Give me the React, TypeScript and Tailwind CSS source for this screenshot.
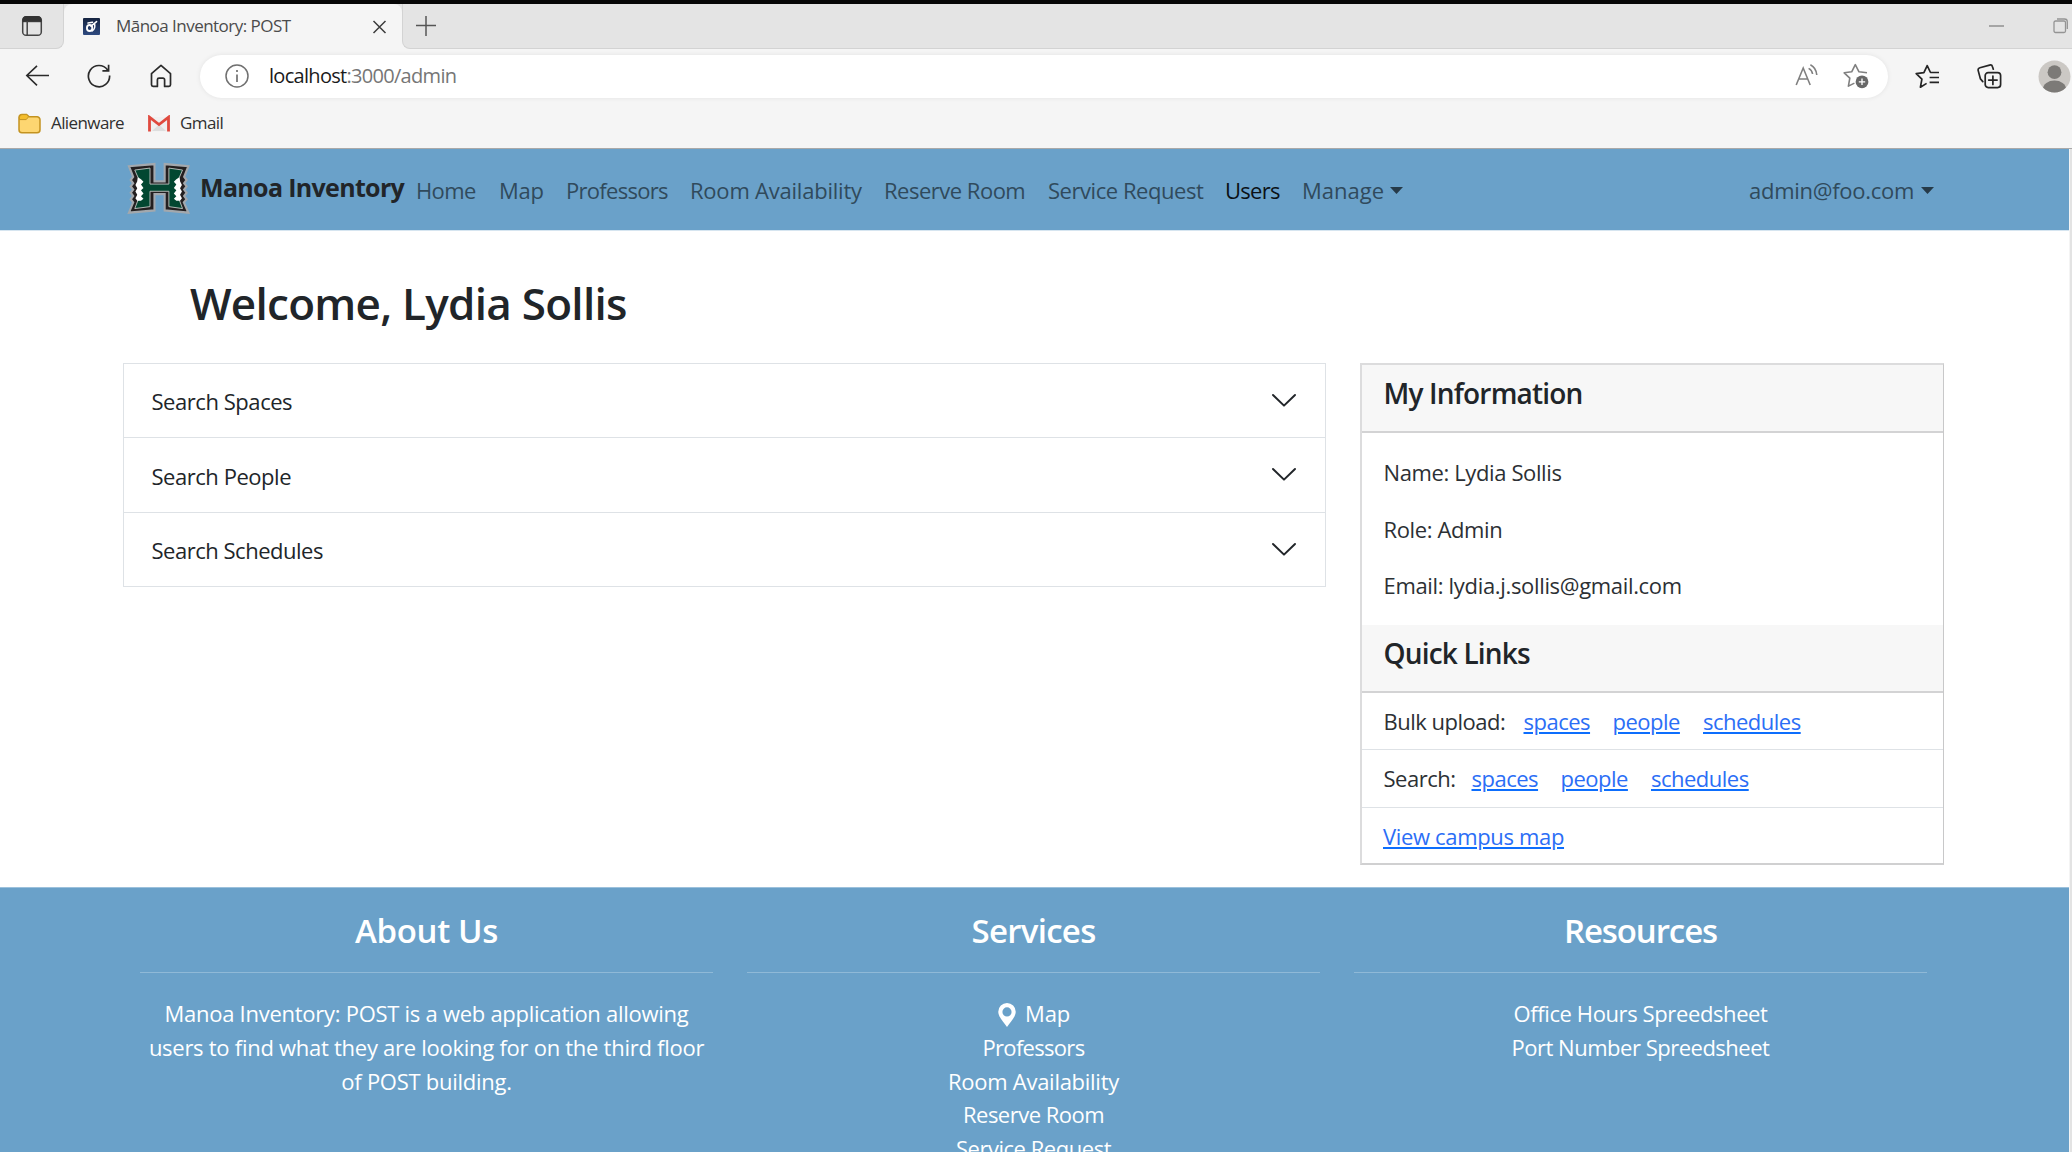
import type { ReactNode } from "react";

function TabActionsIcon() {
  return (
    <svg width="22" height="22" viewBox="0 0 22 22" fill="none" stroke="#444" strokeWidth="1.5">
      <rect x="1.7" y="1.7" width="18.6" height="18.6" rx="3.4" />
      <path d="M2 4.5A3 3 0 0 1 5 1.6h12a3 3 0 0 1 3 2.9v2.2H2z" fill="#333" stroke="#333" strokeWidth="1" />
      <path d="M6.2 6v14" />
    </svg>
  );
}

function Favicon() {
  return (
    <svg width="17" height="17" viewBox="0 0 17 17">
      <defs>
        <linearGradient id="fav" x1="0" y1="0" x2="0" y2="1">
          <stop offset="0" stopColor="#15233f" />
          <stop offset="1" stopColor="#2e4a80" />
        </linearGradient>
      </defs>
      <rect width="17" height="17" rx="1" fill="url(#fav)" />
      <g fill="none" stroke="#fff" strokeLinecap="round">
        <ellipse cx="6.6" cy="10" rx="2.7" ry="3" strokeWidth="1.8" />
        <path d="M8 8.2 13.6 3.6M5 5l4.600-.8M11.6 6c.6 2.6 0 5.4-2.400 7" strokeWidth="1.5" />
      </g>
    </svg>
  );
}

function HLogo() {
  const outline =
    "M16 29 101 22 101 76 135 76 135 22 214 29 200 62 208 72 200 82 208 92 200 102 208 112 200 122 208 132 199 142 214 174 135 167 135 116 101 116 101 167 16 174 30 142 22 132 30 122 22 112 30 102 22 92 30 82 22 72 30 62Z";
  const green =
    "M38 42 87 36 87 85 148 85 148 36 192 42 181 66 181 132 192 160 148 154 148 107 87 107 87 154 38 160 49 132 49 66Z";
  return (
    <svg width="68" height="54" viewBox="11 16 204 162" className="shrink-0">
      <g transform="translate(112 98) scale(.9 .96) translate(-115 -98)">
        <path d={outline} fill="#231f20" stroke="#a3a8ad" strokeWidth="7" strokeLinejoin="miter" />
      </g>
      <g transform="translate(112 98) scale(.93 .98) translate(-115 -98)">
        <path d={green} fill="#024731" stroke="#b9bdbb" strokeWidth="3" />
        <path d="M48 64 58 70 66 78 58 86 66 97 58 104 66 114 58 122 66 130 58 136 46 136 40 128 46 118 40 108 46 98 40 88 46 76Z" fill="#fff" />
        <path d="M182 64 172 70 164 78 172 86 164 97 172 104 164 114 172 122 164 130 172 136 184 136 190 128 184 118 190 108 184 98 190 88 184 76Z" fill="#fff" />
      </g>
    </svg>
  );
}

function Caret() {
  return (
    <svg width="13" height="7" viewBox="0 0 13 7" className="shrink-0">
      <path d="M0 0h13L6.5 7z" fill="#263a48" />
    </svg>
  );
}

function BrowserChrome() {
  return (
    <header className="h-[149px] shrink-0 bg-[#f5f5f5] border-b border-[#a9a9a9] font-['Segoe_UI','Open_Sans',sans-serif]">
      <div className="h-1 bg-[#060606]" />
      <div className="flex h-[45px] bg-[#f5f5f5]">
        <div className="flex w-[64px] shrink-0 items-center rounded-br-lg border-b border-r border-[#d3d3d3] bg-[#e4e4e4] pl-[21px] pb-px">
          <TabActionsIcon />
        </div>
        <div className="flex w-[338px] shrink-0 items-center bg-[#e4e4e4]">
          <div className="flex h-full w-full items-center rounded-t-lg bg-[#f5f5f5] pl-[19px] pr-[15px] pb-px">
            <Favicon />
            <span className="ml-4 grow whitespace-nowrap text-[17px] tracking-[-0.53px] text-[#4b4b4b]">Mānoa Inventory: POST</span>
            <svg width="15" height="15" viewBox="0 0 15 15" stroke="#3c3c3c" strokeWidth="1.5">
              <path d="M1.5 2 13.5 14M13.5 2 1.5 14" />
            </svg>
          </div>
        </div>
        <div className="flex grow items-center rounded-bl-lg border-b border-l border-[#d3d3d3] bg-[#e4e4e4] pl-[13px] pr-[4px]">
          <svg width="20" height="20" viewBox="0 0 20 20" stroke="#555" strokeWidth="1.5">
            <path d="M0 9.5h20M10 0v20" />
          </svg>
          <div className="grow" />
          <div className="mr-[49px] h-[2px] w-[15px] bg-[#a5a5a5]" />
          <svg width="15" height="16" viewBox="0 0 15 16" fill="none" stroke="#949494" strokeWidth="1.3">
            <rect x="1" y="3" width="11.5" height="11.5" rx="1.5" />
            <path d="M4 1h7.5a2.8 2.8 0 0 1 2.8 2.8V11" />
          </svg>
        </div>
      </div>
      <div className="flex h-[54px] items-center pl-[25px] pr-px">
        <svg width="24" height="24" viewBox="0 0 24 24" fill="none" stroke="#2a2a2a" strokeWidth="1.6">
          <path d="M24 11.5H1.8M12 1.8 1.8 11.5 12 21.4" />
        </svg>
        <svg width="24" height="24" viewBox="0 0 24 24" fill="none" stroke="#2a2a2a" strokeWidth="1.7" className="ml-[38px]">
          <path d="M22.6 11.5A10.6 10.6 0 1 1 20.6 5.9M21.6.8v6h-6.2" />
        </svg>
        <svg width="22" height="24" viewBox="0 0 22 24" fill="none" stroke="#2a2a2a" strokeWidth="1.7" strokeLinejoin="round" className="ml-[39px]">
          <path d="M1.5 9.6 11 1.4l9.5 8.2v11.2a1.6 1.6 0 0 1-1.6 1.6h-4.3v-6.6a1.6 1.6 0 0 0-1.6-1.6H9a1.6 1.6 0 0 0-1.6 1.6v6.6H3.1a1.6 1.6 0 0 1-1.6-1.6z" />
        </svg>
        <div className="ml-[28px] flex h-[43px] w-[1688px] items-center rounded-full bg-white pl-[25px] pr-[18px] shadow-[0_0_5px_rgba(0,0,0,0.08)]">
          <svg width="24" height="24" viewBox="0 0 24 24" fill="none" stroke="#707070" strokeWidth="1.5">
            <circle cx="12" cy="12" r="11" />
            <path d="M12 10.5V18M12 6v2" strokeWidth="1.7" />
          </svg>
          <span className="ml-5 grow whitespace-nowrap pb-px text-[20px] leading-[40px] tracking-[-0.7px] text-[#767676]">
            <span className="text-[#1b1b1b]">localhost</span>:3000/admin
          </span>
          <svg width="24" height="24" viewBox="0 0 24 24" fill="none" stroke="#808080" strokeWidth="1.6">
            <path d="M1.2 21 8.2 4l7 17M3.8 15h8.8M13.6 4.4c2.4 1.2 3.6 3 4 5.6M15.4.8c3.8 2 6 5.4 6.4 10.2" />
          </svg>
          <svg width="27" height="26" viewBox="0 0 27 26" fill="none" stroke="#808080" strokeWidth="1.6" strokeLinejoin="round" className="ml-[24px]">
            <path d="M24 9.8 16 8.8 12.3 1.6 8.7 8.8 1.2 9.8l5.6 5.4-1.4 7.9 6-3" />
            <circle cx="19" cy="18.8" r="6.4" fill="#686868" stroke="none" />
            <path d="M19 15.6V22M15.8 18.8h6.4" stroke="#fff" strokeWidth="1.3" />
          </svg>
        </div>
        <svg width="26" height="25" viewBox="0 0 26 25" fill="none" stroke="#252525" strokeWidth="1.7" strokeLinejoin="round" className="ml-[27px]">
          <path d="M24 8.5H15.5L12.2 1.6 8.9 8.6 1.2 9.6l5.7 5.6-1.5 8 6.2-3.8M14.6 13.5H24M14.6 18.3H24" />
        </svg>
        <svg width="25" height="25" viewBox="0 0 25 25" fill="none" stroke="#252525" strokeWidth="1.7" strokeLinecap="round" className="ml-[36px]">
          <path d="M5.8 17.6 3.4 14.8 1.2 6.6A2.4 2.4 0 0 1 2.9 3.7L12.6 1.1a2.4 2.4 0 0 1 2.9 1.7l.8 2.4" />
          <rect x="8.2" y="8.6" width="15.4" height="15" rx="3" />
          <path d="M15.9 12v8.4M11.7 16.1h8.4" />
        </svg>
        <svg width="33" height="33" viewBox="0 0 33 33" className="ml-[36px]">
          <defs>
            <clipPath id="avatar">
              <circle cx="16.5" cy="16.5" r="16" />
            </clipPath>
          </defs>
          <circle cx="16.5" cy="16.5" r="16" fill="#cbc8c4" />
          <g clipPath="url(#avatar)" fill="#7c7a77">
            <circle cx="16.5" cy="12.2" r="6.9" />
            <ellipse cx="16.5" cy="29" rx="11.5" ry="8.4" />
          </g>
        </svg>
      </div>
      <div className="flex h-[40px] items-center pl-[18px] text-[17px] tracking-[-0.6px] text-[#303030]">
        <svg width="23" height="21" viewBox="0 0 23 21">
          <path d="M1 4.4A3 3 0 0 1 4 1.6h4.6l2.6 2.2h7.6A3 3 0 0 1 22 6.8v10a3 3 0 0 1-3 3H4a3 3 0 0 1-3-3z" fill="#fdd671" stroke="#c39320" strokeWidth="1.5" />
          <path d="M1.4 6.6V4.4A2.8 2.8 0 0 1 4 1.6h4.6l2 2.2-2.4 2.8z" fill="#f4bd2c" stroke="#c39320" strokeWidth="1" />
        </svg>
        <span className="ml-[10px] w-[87px]">Alienware</span>
        <svg width="22" height="17" viewBox="0 0 22 17" className="ml-[10px]">
          <path d="M3 2h16v14.5H3z" fill="#f0f0f0" />
          <path d="M4 16 11 9.5 18 16z" fill="#dedede" />
          <path d="M1.5 16.5V2.2L11 9.6l9.5-7.4v14.3" fill="none" stroke="#e04a3f" strokeWidth="2.8" />
        </svg>
        <span className="ml-[10px]">Gmail</span>
      </div>
    </header>
  );
}

function NavBar() {
  return (
    <nav className="flex h-[81px] items-center bg-[#6aa1c9] pl-[125px] pr-[135px] text-[22px] text-[#304a5c]">
      <div className="flex h-full w-[291px] shrink-0 items-start pt-[12px]">
        <HLogo />
        <span className="ml-[7px] mt-[9px] whitespace-nowrap text-[25px] font-bold leading-[34px] tracking-[-0.67px] text-[#212529]">Manoa Inventory</span>
      </div>
      <div className="flex grow whitespace-nowrap leading-[34px]">
        <a className="w-[83px] tracking-[-0.6px]">Home</a>
        <a className="w-[67px] tracking-[-0.3px]">Map</a>
        <a className="w-[124px] tracking-[-0.7px]">Professors</a>
        <a className="w-[194px] tracking-[-0.22px]">Room Availability</a>
        <a className="w-[164px] tracking-[-0.5px]">Reserve Room</a>
        <a className="w-[177px] tracking-[-0.45px]">Service Request</a>
        <a className="w-[77px] tracking-[-0.7px] text-[#0b1116]">Users</a>
        <a className="flex items-start gap-[6px]">
          Manage
          <span className="pt-[14px] leading-none"><Caret /></span>
        </a>
      </div>
      <a className="flex items-start gap-[7px] leading-[34px] tracking-[-0.28px]">
        admin@foo.com
        <span className="pt-[14px] leading-none"><Caret /></span>
      </a>
    </nav>
  );
}

function SearchPanel({ label, track }: { label: string; track: string }) {
  return (
    <div className="flex h-[74.3px] items-center justify-between border-b border-[#dee2e6] pl-[27.5px] pr-[28.5px]">
      <span className={`pt-[1.5px] text-[22px] leading-[34px] text-[#212529] ${track}`}>{label}</span>
      <svg width="26" height="15" viewBox="0 0 26 15" fill="none" stroke="#212529" strokeWidth="2" strokeLinecap="round" strokeLinejoin="round">
        <path d="M2 2 13 12.6 24 2" />
      </svg>
    </div>
  );
}

function CardHeader({ children }: { children: ReactNode }) {
  return (
    <h5 className="h-[68px] border-b-2 border-[#d3d3d4] bg-[#f7f7f7] pl-[21.5px] pt-[11px] text-[28px] font-semibold leading-[34px] tracking-[-0.82px] text-[#212529]">
      {children}
    </h5>
  );
}

const link = "text-[#2b6ef6] underline decoration-[#0d6efd] decoration-2 underline-offset-[2px]";

function LinkRow({ label, width }: { label: string; width: string }) {
  return (
    <div className="flex h-[57.3px] items-center border-b border-[#dee2e6] pl-[21.5px] leading-[34px]">
      <span className={width}>{label}</span>
      <span className="flex w-[89px]"><a className={link}>spaces</a></span>
      <span className="flex w-[90.5px]"><a className={link}>people</a></span>
      <a className={link}>schedules</a>
    </div>
  );
}

function InfoCard() {
  return (
    <section className="h-[502px] w-[584px] border-2 border-r border-[#dcdcdd] border-r-[#c8c8c9] border-b-[#d0d0d1] bg-white text-[22px] tracking-[-0.5px] text-[#2c3034]">
      <CardHeader>My Information</CardHeader>
      <div className="flex h-[192px] flex-col gap-[22.5px] pl-[21.5px] pt-[22px] leading-[34px]">
        <p className="tracking-[-0.38px]">Name: Lydia Sollis</p>
        <p className="tracking-[-0.38px]">Role: Admin</p>
        <p className="tracking-[-0.33px]">Email: lydia.j.sollis@gmail.com</p>
      </div>
      <CardHeader>Quick Links</CardHeader>
      <LinkRow label="Bulk upload:" width="w-[140px]" />
      <LinkRow label="Search:" width="w-[88px]" />
      <div className="flex h-[54px] items-center pl-[21px] pt-[2px] leading-[34px]">
        <a className={`${link} tracking-[-0.34px]`}>View campus map</a>
      </div>
    </section>
  );
}

function FooterColumn({ title, track, children }: { title: string; track: string; children: ReactNode }) {
  return (
    <div className="w-[573px] text-center">
      <h3 className={`h-[61px] text-[33px] font-semibold leading-[40px] ${track}`}>{title}</h3>
      <hr className="mb-[24px] h-px border-0 border-t border-[#8fb9d7]" />
      <div className="flex flex-col leading-[33.75px]">{children}</div>
    </div>
  );
}

function Footer() {
  return (
    <footer className="flex h-[265px] gap-[34px] overflow-hidden border-t border-[#9cc1dc] bg-[#6aa1c9] pl-[140px] pt-[23px] text-[22px] text-white">
      <FooterColumn title="About Us" track="tracking-[-0.33px]">
        <p className="tracking-[-0.27px]">
          Manoa Inventory: POST is a web application allowing users to find what they are looking for on the third floor of POST building.
        </p>
      </FooterColumn>
      <FooterColumn title="Services" track="tracking-[-0.7px]">
        <a className="flex items-center justify-center gap-[9px] pl-px tracking-[-0.16px]">
          <svg width="18" height="24" viewBox="0 0 16 22" className="mt-[3px]">
            <path fillRule="evenodd" d="M8 0a8 8 0 0 1 8 8c0 4.600-4.800 9.600-8 14C4.800 17.600 0 12.600 0 8a8 8 0 0 1 8-8zm0 4a4.200 4.200 0 1 0 0 8.400A4.200 4.200 0 0 0 8 4z" fill="#fff" />
          </svg>
          Map
        </a>
        <a className="tracking-[-0.7px]">Professors</a>
        <a className="tracking-[-0.27px]">Room Availability</a>
        <a className="tracking-[-0.52px]">Reserve Room</a>
        <a className="tracking-[-0.47px]">Service Request</a>
      </FooterColumn>
      <FooterColumn title="Resources" track="tracking-[-1.1px]">
        <a className="tracking-[-0.39px]">Office Hours Spreedsheet</a>
        <a className="tracking-[-0.49px]">Port Number Spreedsheet</a>
      </FooterColumn>
    </footer>
  );
}

export default function App() {
  return (
    <div className="flex h-[1152px] w-[2072px] flex-col overflow-hidden bg-white">
      <BrowserChrome />
      <div className="flex grow font-['Open_Sans',sans-serif]">
        <div className="w-[2069px]">
          <NavBar />
          <main className="h-[657px] border-t border-[#d6e5f0] pt-[45px]">
            <h1 className="ml-[190px] h-[87px] text-[44px] font-semibold leading-[54px] tracking-[-0.73px] text-[#212529]">Welcome, Lydia Sollis</h1>
            <div className="ml-[123px] flex items-start gap-[34px]">
              <section className="w-[1203px] border border-b-0 border-[#dee2e6]">
                <SearchPanel label="Search Spaces" track="tracking-[-0.45px]" />
                <SearchPanel label="Search People" track="tracking-[-0.46px]" />
                <SearchPanel label="Search Schedules" track="tracking-[-0.48px]" />
              </section>
              <InfoCard />
            </div>
          </main>
          <Footer />
        </div>
        <div className="w-[3px] border-l border-[#f4f4f4] bg-[#e3e3e3]" />
      </div>
    </div>
  );
}
